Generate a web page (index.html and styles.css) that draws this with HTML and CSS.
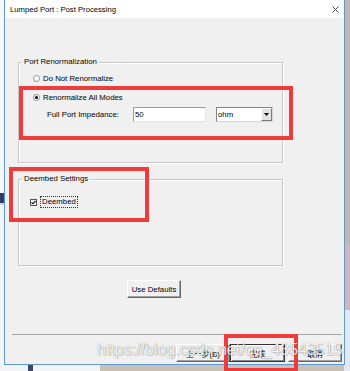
FILE: index.html
```html
<!DOCTYPE html>
<html lang="en">
<head>
  <meta charset="UTF-8" />
  <title>Lumped Port : Post Processing</title>
  <link rel="stylesheet" href="styles.css">
</head>
<body>
  <div class="stage">
    <div class="dialog">
      <div class="titlebar">
        <span class="title">Lumped Port : Post Processing</span>
        <svg class="close" width="7" height="7" viewBox="0 0 7 7"><path d="M0.5 0.5 L6.5 6.5 M6.5 0.5 L0.5 6.5" stroke="#444" stroke-width="1" fill="none"/></svg>
      </div>
      <div class="content">
        <fieldset class="group group-renorm">
          <legend>Port Renormalization</legend>
          <div class="group-body">
            <label class="row"><span class="radio"></span>Do Not Renormalize</label>
            <label class="row row-gap"><span class="radio checked"></span>Renormalize All Modes</label>
            <div class="row field-row">
              <span class="field-label">Full Port Impedance:</span>
              <span class="textbox">50</span>
              <span class="combo">
                <span class="combo-value">ohm</span>
                <span class="combo-btn"><svg width="5" height="3" viewBox="0 0 5 3"><path d="M0 0 H5 L2.5 3 Z" fill="#000"/></svg></span>
              </span>
            </div>
          </div>
        </fieldset>
        <fieldset class="group group-deembed">
          <legend>Deembed Settings</legend>
          <div class="group-body">
            <label class="row">
              <span class="checkbox"><svg width="5" height="5" viewBox="0 0 5 5"><path d="M0.5 2.3 L2 3.8 L4.6 0.8" stroke="#000" stroke-width="1.1" fill="none"/></svg></span>
              <span class="focus">Deembed</span>
            </label>
          </div>
        </fieldset>
        <div class="defaults-row"><button class="btn btn-defaults">Use Defaults</button></div>
      </div>
      <div class="footer">
        <button class="btn btn-back">上一步(B)</button>
        <button class="btn btn-finish">完成</button>
        <button class="btn btn-cancel">取消</button>
      </div>
    </div>

    <div class="mark mark-renorm"></div>
    <div class="mark mark-deembed"></div>
    <div class="mark mark-finish"></div>
    <div class="watermark">https://blog.csdn.net/qq_43543515</div>
  </div>
</body>
</html>
```

FILE: styles.css
```css
* { box-sizing: border-box; }

body {
  margin: 0;
  width: 350px;
  height: 371px;
  overflow: hidden;
  font-family: "Liberation Sans", Arial, "Noto Sans CJK SC", sans-serif;
  font-size: 7.8px;
  color: #000;
}

.stage {
  position: relative;
  width: 350px;
  height: 371px;
  background:
    linear-gradient(to bottom, #c5b7a7 0 245px, #d7b4b6 245px 310px, #e4e8f0 310px) right top / 6px 100% no-repeat,
    linear-gradient(to bottom, #f6f7f9 0 193px, #2f3d5e 193px 203px, #d2d5db 203px 205px, #f3f4f6 205px) left top / 4px 100% no-repeat,
    linear-gradient(to right, #f2f3f5 0 28px, #3b4763 28px 33px, #f2f3f5 33px 100px, #c9c0b5 100px) left bottom / 100% 7px no-repeat,
    #eef0f4;
}

/* window */
.dialog {
  position: absolute;
  left: 4px;
  top: -1px;
  width: 341px;
  height: 366px;
  border: 1px solid #5c9bd8;
  background: #f0f0f0;
  display: flex;
  flex-direction: column;
}

.titlebar {
  height: 18px;
  background: #fff;
  display: flex;
  align-items: center;
  justify-content: space-between;
  padding: 0 5px;
}

.title { font-size: 7.7px; }

.content { padding: 39px 0 0 13px; }

/* group boxes */
.group {
  margin: 0;
  padding: 0;
  width: 265px;
  border: 1px solid #c8c8c8;
  box-shadow: 1px 1px 0 #fff, inset 1px 1px 0 #fff;
}

.group legend {
  margin-left: 3px;
  padding: 0 2px;
  line-height: 10px;
}

.group-renorm .group-body { padding: 5px 0 40px 14px; }

.group-deembed { margin-top: 11px; }
.group-deembed .group-body { padding: 12px 0 57px 11px; }

.row {
  display: flex;
  align-items: center;
  height: 12px;
}

.row-gap { margin-top: 7px; }

.radio {
  width: 7px;
  height: 7px;
  margin-right: 3px;
  border-radius: 50%;
  border: 1px solid #8d8d8d;
  background: #fff;
  display: flex;
  align-items: center;
  justify-content: center;
}

.radio.checked::after {
  content: "";
  width: 3px;
  height: 3px;
  border-radius: 50%;
  background: #000;
}

.field-row {
  height: 15px;
  margin-top: 4px;
}

.field-label {
  width: 86px;
  margin-left: 14px;
}

.textbox {
  width: 73px;
  height: 15px;
  padding-left: 1px;
  line-height: 13px;
  background: #fff;
  border: 1px solid;
  border-color: #9a9a9a #e6e6e6 #e6e6e6 #9a9a9a;
}

.combo {
  display: flex;
  width: 57px;
  height: 15px;
  margin-left: 10px;
  background: #fff;
  border: 1px solid;
  border-color: #858585 #d8d8d8 #d8d8d8 #858585;
}

.combo-value {
  flex: 1;
  padding-left: 1px;
  line-height: 13px;
}

.combo-btn {
  width: 11px;
  display: flex;
  align-items: center;
  justify-content: center;
  background: #e3e3e3;
  border: 1px solid;
  border-color: #fff #7a7a7a #7a7a7a #fff;
}

.checkbox {
  width: 7px;
  height: 7px;
  margin-right: 3px;
  border: 1px solid #555;
  background: #fff;
  display: flex;
  align-items: center;
  justify-content: center;
}

.focus {
  padding: 0 1px;
  line-height: 10px;
  border: 1px dotted #333;
}

/* buttons */
.btn {
  font: inherit;
  color: #000;
  padding: 0;
  height: 18px;
  background: #f0f0f0;
  border: 1px solid;
  border-color: #fff #696969 #696969 #fff;
  box-shadow: inset -1px -1px 0 #a0a0a0;
}

.defaults-row { margin-top: 14px; }

.btn-defaults {
  width: 54px;
  margin-left: 109px;
}

.footer {
  margin: auto 2px 0 7px;
  padding: 9px 0 2px;
  border-top: 1px solid #a8a8a8;
  display: flex;
  justify-content: flex-end;
}

.btn-back { width: 54px; }

.btn-finish {
  width: 55px;
  border-color: #333;
  box-shadow: inset 1px 1px 0 #fff, inset -1px -1px 0 #8a8a8a;
}

.btn-cancel {
  width: 54px;
  margin-left: 3px;
}

/* annotations drawn over the screenshot */
.mark {
  position: absolute;
  border: 4px solid #ee3b3b;
}

.mark-renorm { left: 19px; top: 86px; width: 274px; height: 54px; }
.mark-deembed { left: 9px; top: 167px; width: 140px; height: 55px; }
.mark-finish { left: 224px; top: 334px; width: 74px; height: 38px; }

.watermark {
  position: absolute;
  left: 97px;
  top: 341px;
  font-size: 16px;
  color: rgba(255, 255, 255, 0.9);
  text-shadow: 0 0 1px rgba(0, 0, 0, 0.45), 1px 1px 0 rgba(0, 0, 0, 0.15);
  white-space: nowrap;
}
```
